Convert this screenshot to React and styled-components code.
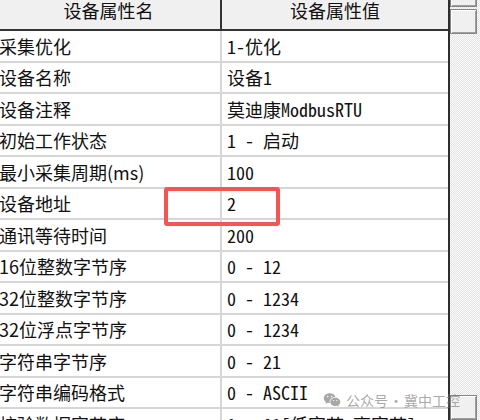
import React from 'react'
import styled, { createGlobalStyle } from 'styled-components'
import { RiWechatFill } from 'react-icons/ri'

const rows = [
    ['采集优化', '1-优化'],
    ['设备名称', '设备1'],
    ['设备注释', '莫迪康ModbusRTU'],
    ['初始工作状态', '1 - 启动'],
    ['最小采集周期(ms)', '100'],
    ['设备地址', '2'],
    ['通讯等待时间', '200'],
    ['16位整数字节序', '0 - 12'],
    ['32位整数字节序', '0 - 1234'],
    ['32位浮点字节序', '0 - 1234'],
    ['字符串字节序', '0 - 21'],
    ['字符串编码格式', '0 - ASCII'],
    ['校验数据字节序', '1 - 01[低字节,高字节]'],
]

const App = () => {
    return (
        <Page>
            <GlobalStyle />
            <TableWrap>
                <Grid>
                    <HeadCell>设备属性名</HeadCell>
                    <HeadCell last>设备属性值</HeadCell>
                    {rows.map(([name, value]) => (
                        <React.Fragment key={name}>
                            <NameCell>{name}</NameCell>
                            <ValueCell>{value}</ValueCell>
                        </React.Fragment>
                    ))}
                </Grid>
            </TableWrap>
            <ScrollBar>
                <ScrollButton size={25} style={{ marginTop: -18 }} />
                <ScrollButton size={25} />
                <Track />
                <ScrollButton size={25} />
            </ScrollBar>
            <Highlight />
            <Watermark>
                <RiWechatFill size={18} />
                <WatermarkText>公众号<Dot>·</Dot>冀中工控</WatermarkText>
            </Watermark>
        </Page>
    )
}

export default App

const GlobalStyle = createGlobalStyle`
  html, body {
    margin: 0;
    padding: 0;
    background: #fff;
  }
  body {
    font-family: "Noto Sans CJK SC", sans-serif;
  }
`

const Page = styled.div`
  position: relative;
  width: 480px;
  height: 420px;
  overflow: hidden;
  display: flex;
  background: #fff;
`

const TableWrap = styled.div`
  width: 453px;
  flex: none;
  margin-top: -6px;
  margin-left: -3px;
  border-right: 2px solid #2e2e2e;
  box-sizing: border-box;
`

const Grid = styled.div`
  display: grid;
  grid-template-columns: 225px 226px;
  grid-template-rows: 37px;
  grid-auto-rows: 31.5px;
`

const HeadCell = styled.div`
  background: #f0f0f0;
  border-bottom: 2px solid #333;
  border-right: ${p => (p.last ? 'none' : '2px solid #333')};
  display: flex;
  align-items: center;
  justify-content: center;
  font-size: 18px;
  color: #111;
  box-sizing: border-box;
  padding-bottom: 4px;
`

const Cell = styled.div`
  display: flex;
  align-items: center;
  box-sizing: border-box;
  border-bottom: 2px solid #d6d6d6;
  font-size: 18px;
  color: #111;
  white-space: nowrap;
  overflow: hidden;
`

const NameCell = styled(Cell)`
  border-right: 2px solid #d6d6d6;
  padding-left: 2px;
`

const ValueCell = styled(Cell)`
  padding-left: 5px;
  font-family: "Noto Sans Mono CJK SC", "Liberation Mono", "Noto Sans CJK SC", monospace;
`

const ScrollBar = styled.div`
  flex: 1;
  display: flex;
  flex-direction: column;
  gap: 2px;
  padding-right: 3px;
  background: repeating-conic-gradient(#e4e4e4 0 25%, #fbfbfb 0 50%) 0 0 / 2px 2px;
`

const ScrollButton = styled.div`
  height: ${p => p.size}px;
  flex: none;
  background: #f0f0f0;
  border: 1px solid #858585;
  box-shadow: inset 1px 1px 0 #fff, inset -1px -1px 0 #a0a0a0;
  box-sizing: border-box;
`

const Track = styled.div`
  flex: 1;
`

const Highlight = styled.div`
  position: absolute;
  left: 164px;
  top: 187px;
  width: 116px;
  height: 39px;
  border: 4px solid #f45656;
  border-radius: 3px;
  box-sizing: border-box;
`

const Watermark = styled.div`
  position: absolute;
  left: 323px;
  top: 391px;
  display: flex;
  align-items: center;
  gap: 5px;
  color: rgba(120, 120, 120, 0.65);
  white-space: nowrap;
`

const WatermarkText = styled.span`
  font-size: 14px;
  line-height: 18px;
`

const Dot = styled.span`
  margin: 0 1px;
`
